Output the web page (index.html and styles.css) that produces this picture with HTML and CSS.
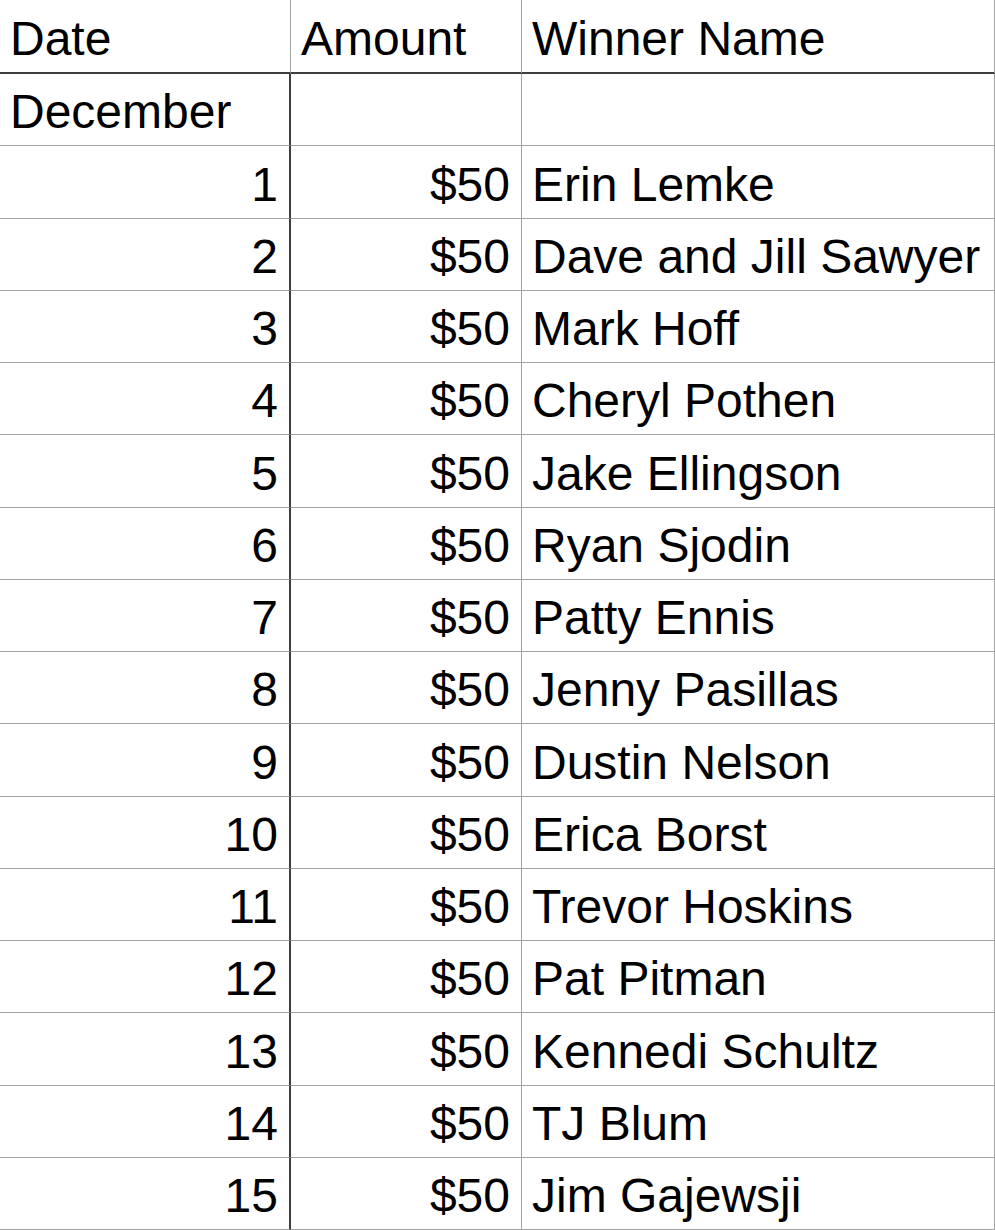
FILE: index.html
```html
<!DOCTYPE html>
<html lang="en">
<head>
<meta charset="utf-8">
<title>Winners</title>
<link rel="stylesheet" href="styles.css">
</head>
<body>
<div class="sheet">
  <div class="cell head c1">Date</div>
  <div class="cell head c2">Amount</div>
  <div class="cell head c3">Winner Name</div>

  <div class="cell c1 body">December</div>
  <div class="cell c2"></div>
  <div class="cell c3"></div>

  <div class="cell c1 body num">1</div><div class="cell c2 num">$50</div><div class="cell c3">Erin Lemke</div>
  <div class="cell c1 body num">2</div><div class="cell c2 num">$50</div><div class="cell c3">Dave and Jill Sawyer</div>
  <div class="cell c1 body num">3</div><div class="cell c2 num">$50</div><div class="cell c3">Mark Hoff</div>
  <div class="cell c1 body num">4</div><div class="cell c2 num">$50</div><div class="cell c3">Cheryl Pothen</div>
  <div class="cell c1 body num">5</div><div class="cell c2 num">$50</div><div class="cell c3">Jake Ellingson</div>
  <div class="cell c1 body num">6</div><div class="cell c2 num">$50</div><div class="cell c3">Ryan Sjodin</div>
  <div class="cell c1 body num">7</div><div class="cell c2 num">$50</div><div class="cell c3">Patty Ennis</div>
  <div class="cell c1 body num">8</div><div class="cell c2 num">$50</div><div class="cell c3">Jenny Pasillas</div>
  <div class="cell c1 body num">9</div><div class="cell c2 num">$50</div><div class="cell c3">Dustin Nelson</div>
  <div class="cell c1 body num">10</div><div class="cell c2 num">$50</div><div class="cell c3">Erica Borst</div>
  <div class="cell c1 body num">11</div><div class="cell c2 num">$50</div><div class="cell c3">Trevor Hoskins</div>
  <div class="cell c1 body num">12</div><div class="cell c2 num">$50</div><div class="cell c3">Pat Pitman</div>
  <div class="cell c1 body num">13</div><div class="cell c2 num">$50</div><div class="cell c3">Kennedi Schultz</div>
  <div class="cell c1 body num">14</div><div class="cell c2 num">$50</div><div class="cell c3">TJ Blum</div>
  <div class="cell c1 body num">15</div><div class="cell c2 num">$50</div><div class="cell c3">Jim Gajewsji</div>
</div>
</body>
</html>
```
FILE: styles.css
```css
html, body {
  margin: 0;
  padding: 0;
  background: #ffffff;
}

.sheet {
  display: grid;
  grid-template-columns: 291px 231px 473px;
  grid-template-rows: 74px repeat(16, 1fr);
  width: 995px;
  height: 1230px;
  font-family: "Liberation Sans", Arial, sans-serif;
  font-size: 48px;
  color: #000000;
  overflow: hidden;
}

.cell {
  box-sizing: border-box;
  display: flex;
  align-items: flex-end;
  padding: 0 11px 6px 10px;
  border-bottom: 1px solid #a3a3a3;
  border-right: 1px solid #a3a3a3;
  white-space: nowrap;
  line-height: normal;
}

.head {
  border-bottom: 2px solid #3d3d3d;
}

.c1.body {
  border-right: 2px solid #3d3d3d;
}

.num {
  justify-content: flex-end;
}
```
